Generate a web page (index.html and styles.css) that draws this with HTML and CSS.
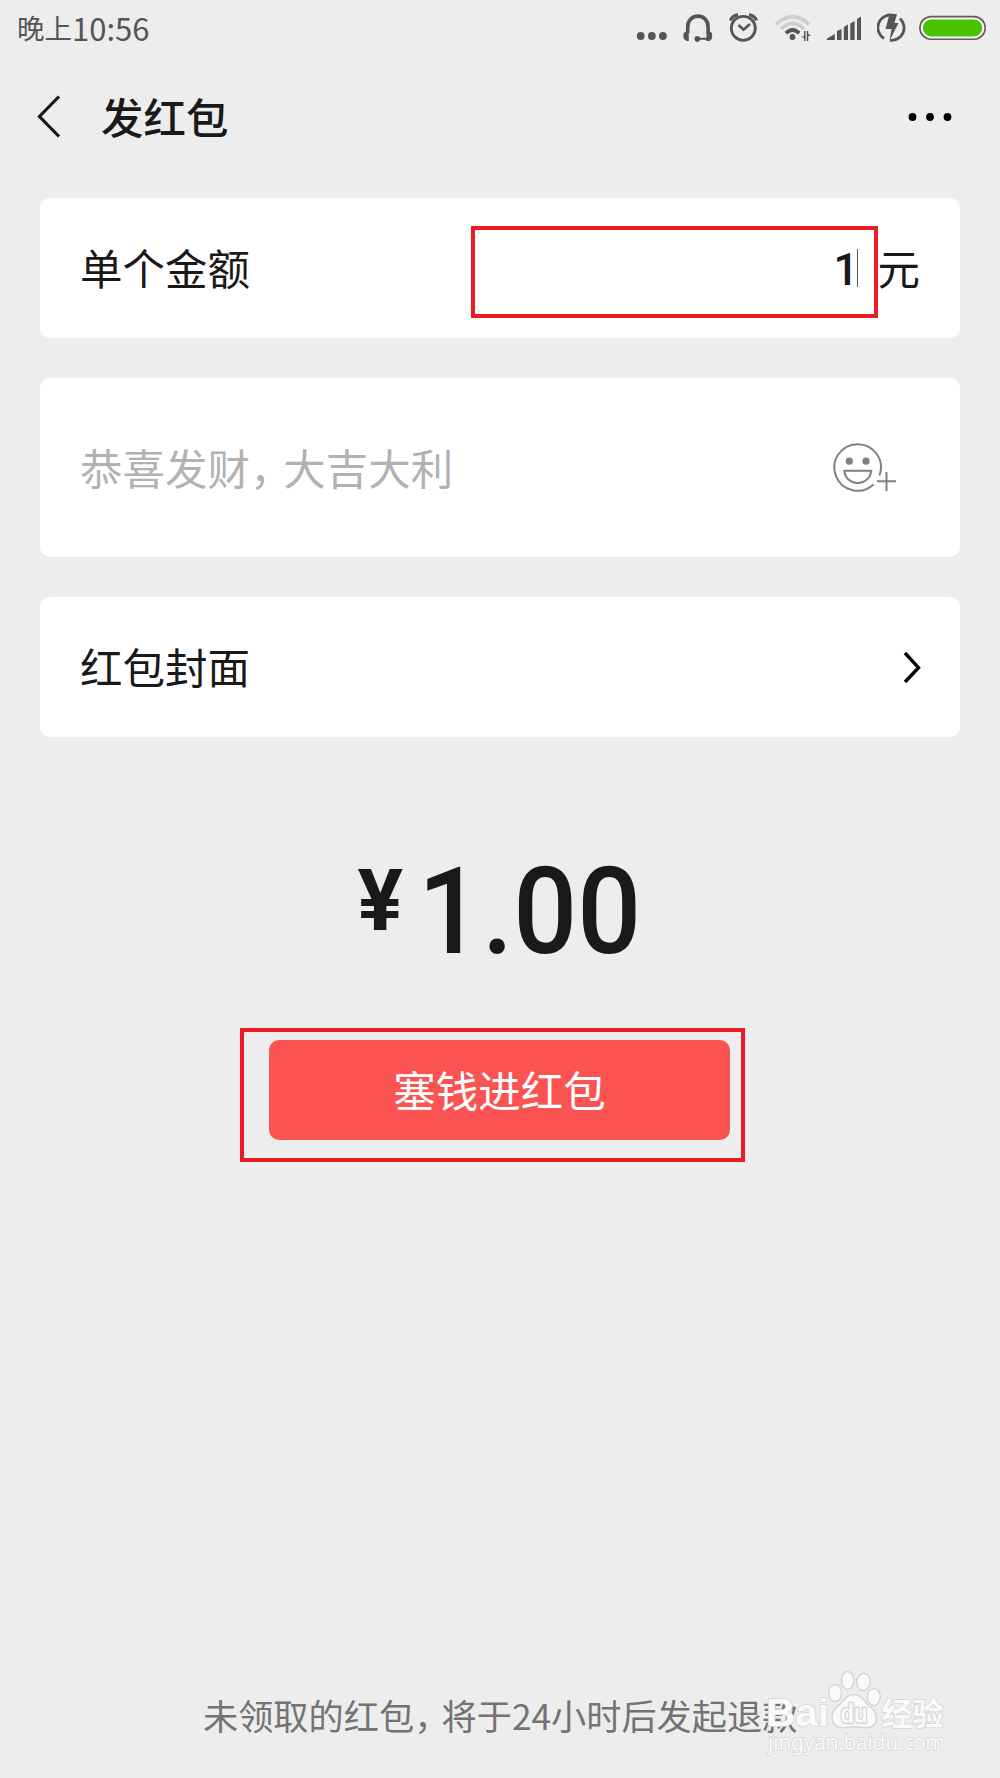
FILE: index.html
```html
<!DOCTYPE html>
<html lang="zh-CN">
<head>
<meta charset="utf-8">
<title>发红包</title>
<link rel="stylesheet" href="styles.css">
</head>
<body>
<div class="screen">
  <header class="status">
    <div class="clock"><span class="period">晚上</span><span class="time">10:56</span></div>
    <div class="status-icons">
      <svg width="32" height="34" viewBox="636 10 32 34" fill="#555"><circle cx="640.7" cy="36" r="3.9"/><circle cx="651.8" cy="36" r="3.9"/><circle cx="662.9" cy="36" r="3.9"/></svg>
      <svg width="30" height="34" viewBox="683 10 30 34" fill="none" stroke="#555"><path d="M687.7 33V27C687.700 12.500 708.100 12.500 708.100 27V33" stroke-width="3.600"/><path d="M698 38.8H708" stroke-width="2"/><path fill="#555" stroke="none" d="M688.8 31.5V41H686.500L685.500 40Q683.300 39.500 683.300 36Q683.300 32.500 685 32ZM706.500 31.500V41H709.500L710.500 40Q712.200 39.500 712.200 36Q712.200 32.500 710.800 32Z"/><circle cx="697.3" cy="38.900" r="2.800" fill="#555" stroke="none"/></svg>
      <svg class="alarm" width="30" height="34" viewBox="728 10 30 34" fill="none" stroke="#555"><circle cx="743.3" cy="28.3" r="12" stroke-width="2.800"/><path d="M738.500 25L743.500 29.800L750 24" stroke-width="2.600"/><path d="M730.400 20.500Q732 15.800 738 14.600M756.500 20.500Q755 15.800 749 14.600" stroke-width="3.200"/></svg>
      <svg width="38" height="34" viewBox="774 10 38 34" fill="none"><path d="M776.200 24.500Q792.500 8.800 809 24.500M781 29Q792.500 17.800 804 29" stroke="#cfcfcf" stroke-width="3.700"/><path d="M785.800 33.200Q792.500 26.800 799.300 33.200" stroke="#555" stroke-width="3.700"/><circle cx="792.500" cy="37" r="2.900" fill="#555"/><path d="M804.700 31V41M807.500 41V31" stroke="#555" stroke-width="1.500"/><path d="M805 38.500L800.800 36.500H805ZM807.500 33.500L811.200 36H807.500Z" fill="#555"/></svg>
      <svg width="35" height="34" viewBox="827 10 35 34" fill="#555"><path d="M827 40V38.500L834.800 34V40ZM837 40V31L841.500 29V40ZM843.800 40V27L848 24.500V40ZM850.300 40V23.500L854.600 21V40ZM857 40V19L861 16.500V40Z"/></svg>
      <svg width="29" height="34" viewBox="877 10 29 34" fill="none"><path d="M884 38.400A12.600 12.600 0 0 1 894 15.500M900 18.500A12.600 12.600 0 0 1 890 40.300" stroke="#555" stroke-width="2.800"/><path d="M889.500 14H897L894.500 23H898.500L889.500 41L891.500 29H885.500Z" fill="#555"/></svg>
      <svg class="battery" width="67" height="34" viewBox="919 10 67 34"><rect x="919.900" y="16.600" width="65.300" height="22.600" rx="11.300" fill="#f7f7f7" stroke="#5c5c5c" stroke-width="1.600"/><rect x="922.900" y="19.500" width="59.300" height="16.900" rx="8.400" fill="#48c300"/></svg>
    </div>
  </header>

  <nav class="navbar">
    <svg class="back" width="24" height="44" viewBox="0 0 24 44"><path d="M22 1.500L2.500 21.500L22 41.500" fill="none" stroke="#191919" stroke-width="3.200"/></svg>
    <h1 class="title">发红包</h1>
    <svg class="more" width="44" height="10" viewBox="0 0 44 10"><circle cx="4.500" cy="5" r="3.900"/><circle cx="22" cy="5" r="3.900"/><circle cx="39.500" cy="5" r="3.900"/></svg>
  </nav>

  <main class="form">
    <section class="card amount">
      <span class="label">单个金额</span>
      <span class="entry"><span class="value">1</span><span class="caret"></span><span class="label">元</span></span>
      <span class="mark mark-amount"></span>
    </section>
    <section class="card greeting">
      <span class="label">恭喜发财<span class="comma">，</span>大吉大利</span>
      <svg width="64" height="50" viewBox="832 442 64 50" fill="none" stroke="#808080" stroke-width="2"><path d="M873.500 483.500A23.300 23.300 0 1 1 879.500 474.500"/><circle cx="849.300" cy="460.200" r="3.600" fill="#808080" stroke="none"/><circle cx="866" cy="460.200" r="3.600" fill="#808080" stroke="none"/><path d="M844.300 469.800H871.200C870.500 477 865 482 857.700 482S845 477 844.300 469.800Z"/><path d="M877 480.300H896M886.500 471V490"/></svg>
    </section>
    <section class="card cover">
      <span class="label">红包封面</span>
      <svg width="18" height="34" viewBox="0 0 18 34"><path d="M2 3L15.500 17.700L2 32" fill="none" stroke="#000" stroke-width="3.400"/></svg>
    </section>
  </main>

  <div class="total"><span class="yen">¥</span><span class="sum">1.00</span></div>

  <div class="action">
    <button class="submit">塞钱进红包</button>
    <span class="mark mark-action"></span>
  </div>

  <footer class="notice">未领取的红包<span class="comma">，</span>将于24小时后发起退款</footer>

  <svg class="watermark" width="190" height="96" viewBox="760 1666 190 96">
    <g fill="#fafafa" stroke="#d6d6d6" stroke-width="1.500">
      <ellipse cx="835" cy="1693" rx="6.500" ry="8.600"/><ellipse cx="847.700" cy="1680.500" rx="6.300" ry="8.900"/><ellipse cx="863.500" cy="1682" rx="6.800" ry="8.700" transform="rotate(8 863.500 1682)"/><ellipse cx="873.800" cy="1697" rx="6.500" ry="8.400"/>
      <path d="M854 1694.500C861 1694.500 864 1701 869 1706C874 1710 877 1713 876.500 1719C876 1726 870 1728 864 1727.500C857 1726.500 852 1726.500 846 1727.500C838 1728.500 832 1725 832 1717C832 1711 836 1708 840 1704C845 1699 847 1694.500 854 1694.500Z"/>
    </g>
    <text class="wm-logo" x="766" y="1726" textLength="63" lengthAdjust="spacingAndGlyphs">Bai</text>
    <text class="wm-du" x="840.500" y="1722.500" textLength="27" lengthAdjust="spacingAndGlyphs">du</text>
    <text class="wm-cn" x="881.500" y="1724.500" textLength="62">经验</text>
    <text class="wm-url" x="768" y="1750" textLength="177">jingyan.baidu.com</text>
  </svg>
</div>
</body>
</html>
```
FILE: styles.css
```css
* { box-sizing: border-box; }

body {
  margin: 0;
  background: #ededed;
  color: #191919;
  font-family: "Noto Sans CJK SC", sans-serif;
}

svg { display: block; flex: none; }

.screen {
  position: relative;
  display: flex;
  flex-direction: column;
  width: 1000px;
  height: 1778px;
  overflow: hidden;
}

.status {
  display: flex;
  justify-content: space-between;
  height: 58px;
  padding: 10px 14px 0 17px;
  color: #555;
}

.clock {
  display: flex;
  font-size: 27.500px;
  line-height: 34px;
}

.time { font-size: 31px; line-height: 36px; }

.status-icons { display: flex; gap: 15px; }

.alarm { margin-right: 1px; }

.battery { margin-left: -2px; }

.navbar {
  display: flex;
  align-items: center;
  height: 118px;
  padding: 0 48px 0 37px;
}

.title {
  margin: 0 0 2px 40px;
  padding-bottom: 1px;
  font-size: 42.500px;
  font-weight: 500;
  line-height: 60px;
}

.more { margin-left: auto; }

.form {
  display: flex;
  flex-direction: column;
  gap: 40px;
  padding: 22px 40px 0;
}

.card {
  position: relative;
  display: flex;
  align-items: center;
  justify-content: space-between;
  height: 140px;
  padding: 0 40px;
  border-radius: 10px;
  background: #fff;
  font-size: 42.500px;
  line-height: 60px;
}

.label { padding-bottom: 2px; }

.greeting {
  height: 179px;
  padding-right: 64px;
  color: #b2b2b2;
}

.cover { padding-right: 39px; }

.entry { display: flex; align-items: center; }

.value {
  padding-top: 3px;
  font-family: Roboto, sans-serif;
  font-size: 44px;
  font-weight: 500;
}

.caret {
  width: 1px;
  height: 38px;
  margin: 0 19px 0 -1px;
  background: #555;
}

.comma { letter-spacing: -0.220em; }

.mark {
  position: absolute;
  border: 4.500px solid #ed1c24;
}

.mark-amount { left: 431px; top: 28px; width: 407px; height: 92px; }

.total {
  display: flex;
  align-items: flex-start;
  justify-content: center;
  gap: 14.500px;
  height: 140px;
  margin-top: 104px;
  padding-left: 15px;
  font-family: Roboto, sans-serif;
  font-weight: 500;
}

.yen { font-size: 85px; line-height: 120px; font-weight: 700; }

.sum {
  font-size: 121px;
  line-height: 142px;
  transform: scaleX(0.93);
  transform-origin: left;
}

.action {
  position: relative;
  width: 461px;
  height: 100px;
  margin: 59px 0 0 269px;
}

.submit {
  width: 100%;
  height: 100%;
  padding: 0 0 2px;
  border: 0;
  border-radius: 10px;
  background: #fb5252;
  color: #fff;
  font: 42.500px/60px "Noto Sans CJK SC", sans-serif;
}

.mark-action { left: -29px; top: -12px; width: 505px; height: 134px; }

.notice {
  margin: auto 0 37px 203px;
  color: #737373;
  font-size: 35.200px;
  line-height: 52px;
  white-space: nowrap;
}

.watermark { position: absolute; left: 760px; top: 1666px; }

.watermark text {
  fill: #fafafa;
  stroke: #d6d6d6;
  stroke-width: 1.500px;
  paint-order: stroke;
}

.wm-logo { font: 700 39px "Liberation Sans", sans-serif; }

.watermark .wm-du { font: 700 27px "Liberation Sans", sans-serif; fill: #fafafa; stroke: #cfcfcf; stroke-width: 2.500px; }

.wm-cn { font: 700 31px "Noto Sans CJK SC", sans-serif; }

.wm-url { font: 21px "Noto Sans", sans-serif; }
```
